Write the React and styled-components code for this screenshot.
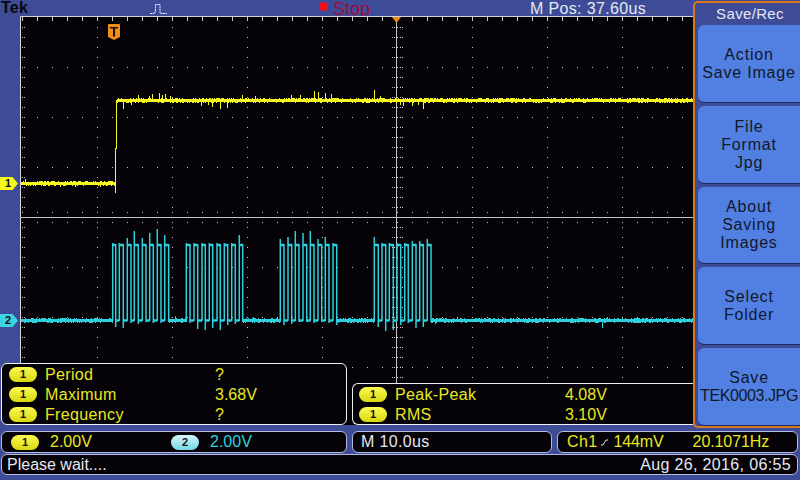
import React from "react";
import styled, { createGlobalStyle } from "styled-components";

const BLUE = "#3e4c98";
const YELLOW = "#e8e820";
const CYAN = "#2fd0dc";
const FONT = `"Liberation Sans", Arial, sans-serif`;

const GlobalStyle = createGlobalStyle`
  html, body {
    margin: 0;
    padding: 0;
    background: ${BLUE};
  }
  * {
    box-sizing: border-box;
  }
`;

const Screen = styled.div`
  width: 800px;
  height: 480px;
  background: ${BLUE};
  font-family: ${FONT};
  font-size: 16px;
  letter-spacing: 0.35px;
  overflow: hidden;
`;

const Upper = styled.div`
  display: flex;
  height: 431px;
`;

const ScopeColumn = styled.div`
  width: 693px;
  display: flex;
  flex-direction: column;
`;

const TopBar = styled.div`
  height: 16px;
  display: flex;
  align-items: center;
  line-height: 16px;
  white-space: nowrap;
`;

const Logo = styled.span`
  width: 149px;
  padding-left: 1px;
  color: #08080c;
  font-size: 16px;
  font-weight: bold;
  letter-spacing: 0.2px;
`;

const PulseIcon = styled.svg`
  width: 20px;
  height: 16px;
  margin-right: 150px;
`;

const RunDot = styled.span`
  width: 9px;
  height: 9px;
  margin-top: -3px;
  margin-right: 5px;
  border-radius: 50%;
  background: #f01018;
`;

const RunState = styled.span`
  width: 197px;
  padding-top: 2px;
  color: #96103c;
  font-size: 18px;
  letter-spacing: 0;
`;

const Position = styled.span`
  padding-top: 2px;
  color: #e4e8f0;
  font-size: 16px;
`;

const PlotArea = styled.div`
  position: relative;
  height: 409px;
  padding-left: 20px;
`;

const Plot = styled.svg`
  display: block;
  width: 673px;
  height: 409px;
  background: #050208;
`;

const ChannelTag = styled.span`
  position: absolute;
  left: 0;
  top: ${({ $top }) => $top}px;
  width: 18px;
  height: 13px;
  padding-left: 5px;
  background: ${({ $color }) => $color};
  clip-path: polygon(0 0, 70% 0, 100% 50%, 70% 100%, 0 100%);
  color: #101010;
  font-size: 11px;
  font-weight: bold;
  line-height: 13px;
`;

const Readouts = styled.div`
  position: absolute;
  left: 1px;
  right: 0;
  bottom: 0;
  display: flex;
  align-items: flex-end;
  gap: 5px;
`;

const ReadoutPanel = styled.div`
  flex: ${({ $wide }) => ($wide ? "0 0 341px" : "0 0 346px")};
  padding-left: ${({ $wide }) => ($wide ? 6 : 7)}px;
  background: #050208;
  border: 1px solid #f0f0f0;
  border-right-width: ${({ $wide }) => ($wide ? 0 : 1)}px;
  border-radius: ${({ $wide }) => ($wide ? "6px 0 0 6px" : "6px")};
`;

const ReadoutRow = styled.div`
  display: flex;
  align-items: center;
  height: 20px;
  color: ${YELLOW};
`;

const Badge = styled.span`
  flex: none;
  width: 28px;
  height: 15px;
  border-radius: 8px;
  background: ${({ $cyan }) =>
    $cyan
      ? "linear-gradient(#d8f4f8, #70d8e8)"
      : "linear-gradient(#fbfb50, #d8d810)"};
  color: #141414;
  font-size: 11px;
  font-weight: bold;
  line-height: 15px;
  letter-spacing: 0;
  text-align: center;
`;

const Label = styled.span`
  width: 170px;
  margin-left: 8px;
  padding-top: 2px;
`;

const Value = styled.span`
  padding-top: 2px;
  letter-spacing: 0;
`;

const SideMenu = styled.div`
  width: 107px;
  height: 427px;
  margin-top: 1px;
  padding: 3px 0 0 3px;
  display: flex;
  flex-direction: column;
  gap: 3px;
  border: 2px solid #d87820;
  border-right: 0;
  border-radius: 5px 0 0 5px;
`;

const MenuTitle = styled.div`
  height: 16px;
  padding-left: 2px;
  color: #e4e8f0;
  font-size: 15px;
  line-height: 16px;
  text-align: center;
`;

const MenuButton = styled.div`
  flex: 1;
  display: flex;
  flex-direction: column;
  justify-content: center;
  padding-top: 1px;
  border-radius: 6px 0 0 6px;
  border-bottom: 1px solid #1c2860;
  background: #5280e2;
  color: #10182c;
  font-size: 16px;
  letter-spacing: 0.8px;
  line-height: 18px;
  text-align: center;
  white-space: nowrap;
`;

const FileName = styled.span`
  letter-spacing: -0.4px;
`;

const BarRow = styled.div`
  display: flex;
  gap: 5px;
  height: 22px;
  padding: 0 2px 0 1px;
`;

const Cell = styled.div`
  width: ${({ $width }) => $width}px;
  flex: ${({ $grow }) => ($grow ? 1 : "none")};
  display: flex;
  align-items: center;
  padding: 0 ${({ $right }) => $right || 0}px 0 ${({ $left }) => $left}px;
  background: #050208;
  border: 1px solid #b4bce0;
  border-radius: 6px;
  color: ${({ $color }) => $color || "#e4e8f0"};
  white-space: nowrap;
`;

const ChannelValue = styled.span`
  width: ${({ $width }) => $width}px;
  margin-left: 11px;
  color: ${({ $color }) => $color};
  letter-spacing: 0;
`;

const TriggerText = styled.span`
  margin-left: ${({ $gap }) => $gap}px;
  letter-spacing: -0.1px;
`;

const SlopeIcon = styled.svg`
  width: 8px;
  height: 10px;
  margin-left: 3px;
`;

const StatusRow = styled(BarRow)`
  margin-top: 1px;
  height: 21px;
`;

const StatusMessage = styled.span`
  padding-top: 1px;
  letter-spacing: 0;
`;

const StatusDate = styled.span`
  margin-left: auto;
  padding-top: 1px;
`;

function makeRandom(seed) {
  let s = seed;
  return () => {
    s = (s * 16807) % 2147483647;
    return s / 2147483647;
  };
}

// grid ticks, all in screen pixels because of the viewBox on the plot
function graticule() {
  let d = "";
  for (let y = 17; y < 425; y += 50) {
    for (let x = 21.5; x < 693; x += 15) d += `M${x} ${y}h1v1h-1z`;
  }
  for (let x = 21.5; x < 693; x += 75) {
    for (let y = 27; y < 425; y += 10) d += `M${x} ${y}h1v1h-1z`;
  }
  for (let x = 21.5; x < 693; x += 15) {
    d += `M${x} 17h1v4h-1zM${x} 212h1v1h-1zM${x} 222h1v1h-1z`;
  }
  for (let y = 27; y < 425; y += 10) {
    d += `M23.5 ${y}h1v1h-1zM391.500 ${y}h1v1h-1zM393.500 ${y}h1v1h-1zM399.500 ${y}h1v1h-1zM401.500 ${y}h1v1h-1z`;
  }
  return d;
}

function noisyLine(x0, x1, y, spikes, seed) {
  const rnd = makeRandom(seed);
  let d = "";
  for (let x = x0; x <= x1; x++) {
    const top = y - (rnd() > 0.6 ? 1 : 0);
    const bottom = y + 3 + (rnd() > 0.7 ? 1 : 0);
    d += `M${x + 0.5} ${top}V${bottom}`;
  }
  Object.entries(spikes).forEach(([x, to]) => {
    d += `M${Number(x) + 0.5} ${y}V${to}`;
  });
  return d;
}

const yellowLow = noisyLine(21, 115, 182, { 25: 179, 60: 187, 75: 187, 100: 187 }, 11);
const yellowHigh = noisyLine(117, 693, 99, {
  123: 109, 131: 105, 138: 95, 149: 96, 152: 94, 159: 93, 162: 95, 165: 94, 170: 96,
  201: 106, 208: 105, 212: 107, 220: 109, 227: 108, 242: 95, 255: 96, 291: 95,
  300: 95, 314: 91, 318: 92, 325: 93, 331: 94, 374: 90, 380: 96, 400: 105,
  403: 106, 412: 106, 418: 105, 423: 109,
}, 29);

const cyanBase =
  noisyLine(21, 112, 319, { 60: 323 }, 47) +
  noisyLine(169, 186, 319, { 175: 316, 182: 323 }, 53) +
  noisyLine(243, 280, 319, { 253: 317 }, 59) +
  noisyLine(337, 374, 319, { 360: 323 }, 61) +
  noisyLine(431, 693, 319, { 435: 324, 505: 323, 602: 328, 640: 323 }, 67);

const bursts = [
  {
    rises: [112.7, 119.3, 127.3, 134.3, 142.3, 149.7, 157.3, 164.7],
    falls: [115.7, 123.3, 131, 138.3, 146, 153.3, 161, 168.7],
    tops: [243, 243, 238, 231, 238, 233, 229, 235],
    lows: [327, 328, 323, 324, 322, 323, 323, 322],
  },
  {
    rises: [186.3, 194, 202, 209.3, 217, 224.3, 231.7, 239.3],
    falls: [190, 197.7, 205.3, 212.7, 220.3, 227.7, 235.3, 242.7],
    tops: [243, 243, 243, 243, 243, 243, 243, 235],
    lows: [323, 329, 330, 328, 330, 325, 324, 322],
  },
  {
    rises: [280.3, 288, 295.3, 303, 310.3, 318, 325.3, 333],
    falls: [284, 291.7, 299, 306.7, 314, 321.7, 329, 336.7],
    tops: [239, 237, 231, 233, 231, 239, 237, 243],
    lows: [325, 324, 322, 322, 323, 322, 323, 325],
  },
  {
    rises: [374.3, 382, 389.3, 397, 404.7, 412.3, 419.7, 427.3],
    falls: [378.3, 385.7, 393.3, 400.7, 408.3, 416, 423.3, 431],
    tops: [237, 243, 243, 243, 243, 241, 241, 239],
    lows: [327, 331, 330, 325, 323, 328, 327, 322],
  },
];

function burstPath({ rises, falls, tops, lows }) {
  let d = "";
  rises.forEach((x, i) => {
    d += `M${x} 321V${tops[i]}M${falls[i]} 244V${lows[i]}`;
  });
  return d;
}

function shelfPath({ rises, falls }) {
  let d = "";
  rises.forEach((x, i) => {
    d += `M${x} 245H${falls[i]}`;
    if (i < rises.length - 1) d += `M${falls[i]} 320.500H${rises[i + 1]}`;
  });
  return d;
}

const Trigger = () => (
  <>
    <path d="M108 25a1 1 0 0 1 1-1h10a1 1 0 0 1 1 1v12l-6 3l-6-3z" fill="#f08c18" />
    <path d="M110 27h8v1.500h-3v8h-2v-8h-3z" fill="#181008" />
    <path d="M392 17h9l-4.500 6z" fill="#f08c18" />
  </>
);

const App = () => (
  <Screen>
    <GlobalStyle />
    <Upper>
      <ScopeColumn>
        <TopBar>
          <Logo>Tek</Logo>
          <PulseIcon viewBox="0 0 20 16">
            <path d="M1 13.500h4v-1h1v-1h.5V4.500h4.500v8.500h1v.5h6" fill="none" stroke="#f0f0f0" strokeDasharray="2 .6" />
          </PulseIcon>
          <RunDot />
          <RunState>Stop</RunState>
          <Position>M Pos: 37.60us</Position>
        </TopBar>
        <PlotArea>
          <Plot viewBox="20 16 673 409" shapeRendering="crispEdges">
            <path d={graticule()} fill="#c8c8c8" />
            <path d="M20 16.500H693M20.500 16V425" stroke="#d4d4dc" fill="none" />
            <path d="M20 217.500H693M396.500 16V425" stroke="#c4c4c4" fill="none" />
            <path d={yellowLow} stroke="#f6f620" fill="none" />
            <path d={yellowHigh} stroke="#f6f620" fill="none" />
            <path d="M115.500 183V193M115.500 193V148H116.500V100" stroke="#f6f620" fill="none" />
            <path d={cyanBase} stroke={CYAN} fill="none" />
            <g shapeRendering="auto">
              {bursts.map((b) => (
                <g key={b.rises[0]} fill="none" stroke={CYAN}>
                  <path d={burstPath(b)} strokeWidth="1.5" />
                  <path d={shelfPath(b)} strokeWidth="2.5" />
                </g>
              ))}
              <Trigger />
            </g>
          </Plot>
          <ChannelTag $top={161} $color="#f6f620">1</ChannelTag>
          <ChannelTag $top={298} $color="#3ad4e0">2</ChannelTag>
          <Readouts>
            <ReadoutPanel>
              <ReadoutRow><Badge>1</Badge><Label>Period</Label><Value>?</Value></ReadoutRow>
              <ReadoutRow><Badge>1</Badge><Label>Maximum</Label><Value>3.68V</Value></ReadoutRow>
              <ReadoutRow><Badge>1</Badge><Label>Frequency</Label><Value>?</Value></ReadoutRow>
            </ReadoutPanel>
            <ReadoutPanel $wide>
              <ReadoutRow><Badge>1</Badge><Label>Peak-Peak</Label><Value>4.08V</Value></ReadoutRow>
              <ReadoutRow><Badge>1</Badge><Label>RMS</Label><Value>3.10V</Value></ReadoutRow>
            </ReadoutPanel>
          </Readouts>
        </PlotArea>
      </ScopeColumn>
      <SideMenu>
        <MenuTitle>Save/Rec</MenuTitle>
        <MenuButton><span>Action</span><span>Save Image</span></MenuButton>
        <MenuButton><span>File</span><span>Format</span><span>Jpg</span></MenuButton>
        <MenuButton><span>About</span><span>Saving</span><span>Images</span></MenuButton>
        <MenuButton><span>Select</span><span>Folder</span></MenuButton>
        <MenuButton><span>Save</span><FileName>TEK0003.JPG</FileName></MenuButton>
      </SideMenu>
    </Upper>
    <BarRow>
      <Cell $width={346} $left={9}>
        <Badge>1</Badge>
        <ChannelValue $width={121} $color={YELLOW}>2.00V</ChannelValue>
        <Badge $cyan>2</Badge>
        <ChannelValue $color={CYAN}>2.00V</ChannelValue>
      </Cell>
      <Cell $width={200} $left={8}>M 10.0us</Cell>
      <Cell $grow $left={9} $color={YELLOW}>
        Ch1
        <SlopeIcon viewBox="0 0 8 10">
          <path d="M1 8h2l3-5h2" stroke="#e8e8e8" fill="none" />
        </SlopeIcon>
        <TriggerText $gap={5}>144mV</TriggerText>
        <TriggerText $gap={29}>20.1071Hz</TriggerText>
      </Cell>
    </BarRow>
    <StatusRow>
      <Cell $grow $left={5} $right={6}>
        <StatusMessage>Please wait....</StatusMessage>
        <StatusDate>Aug 26, 2016, 06:55</StatusDate>
      </Cell>
    </StatusRow>
  </Screen>
);

export default App;
